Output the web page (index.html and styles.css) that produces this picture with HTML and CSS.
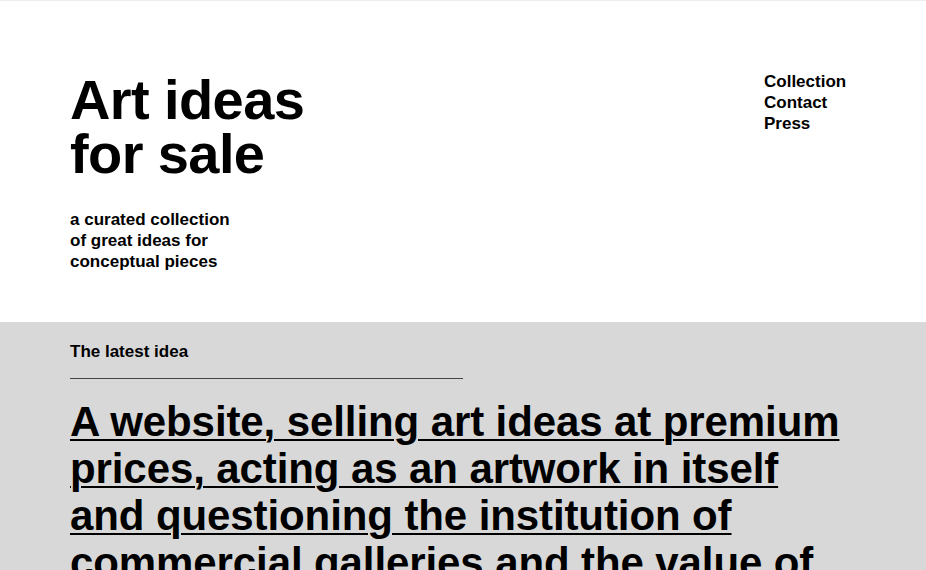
FILE: index.html
```html
<!DOCTYPE html>
<html lang="en">
<head>
<meta charset="utf-8">
<title>Art ideas for sale</title>
<link rel="stylesheet" href="styles.css">
</head>
<body>
<header class="site-header">
  <div class="brand">
    <h1 class="title">Art ideas<br>for sale</h1>
    <p class="tagline">a curated collection<br>of great ideas for<br>conceptual pieces</p>
  </div>
  <nav class="nav">
    <a href="#" class="nav-link">Collection</a>
    <a href="#" class="nav-link">Contact</a>
    <a href="#" class="nav-link">Press</a>
  </nav>
</header>
<main class="latest">
  <h2 class="latest-label">The latest idea</h2>
  <hr class="rule">
  <p class="idea"><a href="#" class="idea-link">A website, selling art ideas at premium prices, acting as an artwork in itself and questioning the institution of commercial galleries and the value of art and ideas.</a></p>
</main>
</body>
</html>
```
FILE: styles.css
```css
html, body {
  margin: 0;
  padding: 0;
}
body {
  font-family: "Liberation Sans", Arial, sans-serif;
  font-weight: 700;
  color: #000;
  background: #fff;
  border-top: 1px solid #ececec;
  height: 569px;
  overflow: hidden;
}
.site-header {
  display: flex;
  justify-content: space-between;
  align-items: flex-start;
  padding: 70px 70px 50px 70px;
}
.title {
  margin: 2px 0 0 0;
  font-size: 56px;
  line-height: 54px;
  letter-spacing: -0.6px;
  font-weight: 700;
}
.tagline {
  margin: 28px 0 0 0;
  font-size: 17px;
  line-height: 21px;
}
.nav {
  display: flex;
  flex-direction: column;
  width: 92px;
}
.nav-link {
  color: #000;
  text-decoration: none;
  font-size: 17px;
  line-height: 21px;
}
.latest {
  background: #d8d8d8;
  padding: 19px 70px 40px 70px;
}
.latest-label {
  margin: 0;
  font-size: 17px;
  line-height: 21px;
  font-weight: 700;
}
.rule {
  width: 393px;
  margin: 16px 0 0 0;
  border: 0;
  border-top: 1px solid #444;
  height: 0;
}
.idea {
  margin: 19px 0 0 0;
  font-size: 42px;
  line-height: 47px;
  letter-spacing: -0.1px;
}
.idea-link {
  color: #000;
  text-decoration: underline;
  text-decoration-thickness: 2px;
  text-underline-offset: 3px;
}
```
